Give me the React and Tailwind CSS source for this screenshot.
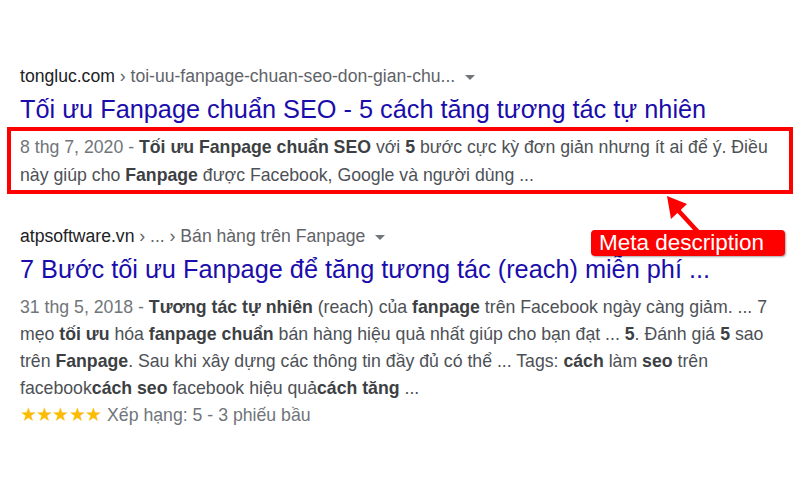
const Caret = () => (
  <span className="inline-block ml-[10px] align-middle w-0 h-0 border-x-[5px] border-x-transparent border-t-[5px] border-t-[#70757a]" />
);

const Stars = () => (
  <span className="text-[#fbbc04] text-[19px] tracking-[-0.8px] mr-[6px]">★★★★★</span>
);

export default function App() {
  return (
    <div className="relative w-[800px] h-[500px] bg-white overflow-hidden" style={{ fontFamily: '"Liberation Sans", Arial, sans-serif' }}>
      <div className="pt-[64px] px-[7px]">
        {/* result 1 */}
        <div className="px-[13px] text-[17.6px] leading-[24px] text-[#202124] whitespace-nowrap">
          tongluc.com <span className="text-[#5f6368]">› toi-uu-fanpage-chuan-seo-don-gian-chu...</span>
          <Caret />
        </div>
        <div className="px-[13px] mt-[4px] text-[25.3px] leading-[34px] text-[#1a0dab] whitespace-nowrap">
          Tối ưu Fanpage chuẩn SEO - 5 cách tăng tương tác tự nhiên
        </div>
        <div className="mt-[1px] border-[4px] border-[#ff0000] px-[9px] pt-[2px] pb-[1px] text-[17.7px] leading-[28px] text-[#4d5156] whitespace-nowrap">
          <span className="text-[#70757a]">8 thg 7, 2020 - </span>
          <b className="text-[#3c4043]">Tối ưu Fanpage chuẩn SEO</b> với <b className="text-[#3c4043]">5</b> bước cực kỳ đơn giản nhưng ít ai để ý. Điều
          <br />
          này giúp cho <b className="text-[#3c4043]">Fanpage</b> được Facebook, Google và người dùng ...
        </div>

        {/* result 2 */}
        <div className="mt-[30px] px-[13px] text-[17.6px] leading-[24px] text-[#202124] whitespace-nowrap">
          atpsoftware.vn <span className="text-[#5f6368]">› ... › Bán hàng trên Fanpage</span>
          <Caret />
        </div>
        <div className="px-[13px] mt-[4px] text-[25.3px] leading-[34px] text-[#1a0dab] whitespace-nowrap">
          7 Bước tối ưu Fanpage để tăng tương tác (reach) miễn phí ...
        </div>
        <div className="px-[13px] mt-[8px] text-[17.7px] leading-[26.9px] text-[#4d5156] whitespace-nowrap">
          <div>
            <span className="text-[#70757a]">31 thg 5, 2018 - </span>
            <b className="text-[#3c4043]">Tương tác tự nhiên</b> (reach) của <b className="text-[#3c4043]">fanpage</b> trên Facebook ngày càng giảm. ... 7
          </div>
          <div>
            mẹo <b className="text-[#3c4043]">tối ưu</b> hóa <b className="text-[#3c4043]">fanpage chuẩn</b> bán hàng hiệu quả nhất giúp cho bạn đạt ... <b className="text-[#3c4043]">5</b>. Đánh giá <b className="text-[#3c4043]">5</b> sao
          </div>
          <div>
            trên <b className="text-[#3c4043]">Fanpage</b>. Sau khi xây dựng các thông tin đầy đủ có thể ... Tags: <b className="text-[#3c4043]">cách</b> làm <b className="text-[#3c4043]">seo</b> trên
          </div>
          <div>
            facebook<b className="text-[#3c4043]">cách seo</b> facebook hiệu quả<b className="text-[#3c4043]">cách tăng</b> ...
          </div>
          <div className="text-[#70757a]">
            <Stars />Xếp hạng: 5 - 3 phiếu bầu
          </div>
        </div>
      </div>

      {/* annotation */}
      <svg className="absolute left-[655px] top-[193px]" width="50" height="42" viewBox="0 0 50 42">
        <line x1="43" y1="39" x2="21" y2="15" stroke="#ff0000" strokeWidth="4.5" />
        <polygon points="12,3 32,11 16,26" fill="#ff0000" />
      </svg>
      <div className="absolute left-[591px] top-[230px] w-[194px] h-[26px] rounded-[4px] bg-[#ff0000] shadow-[1px_1px_2px_rgba(0,0,0,0.35)] text-white text-[22.5px] leading-[26px] pl-[8px]">
        Meta description
      </div>
    </div>
  );
}
